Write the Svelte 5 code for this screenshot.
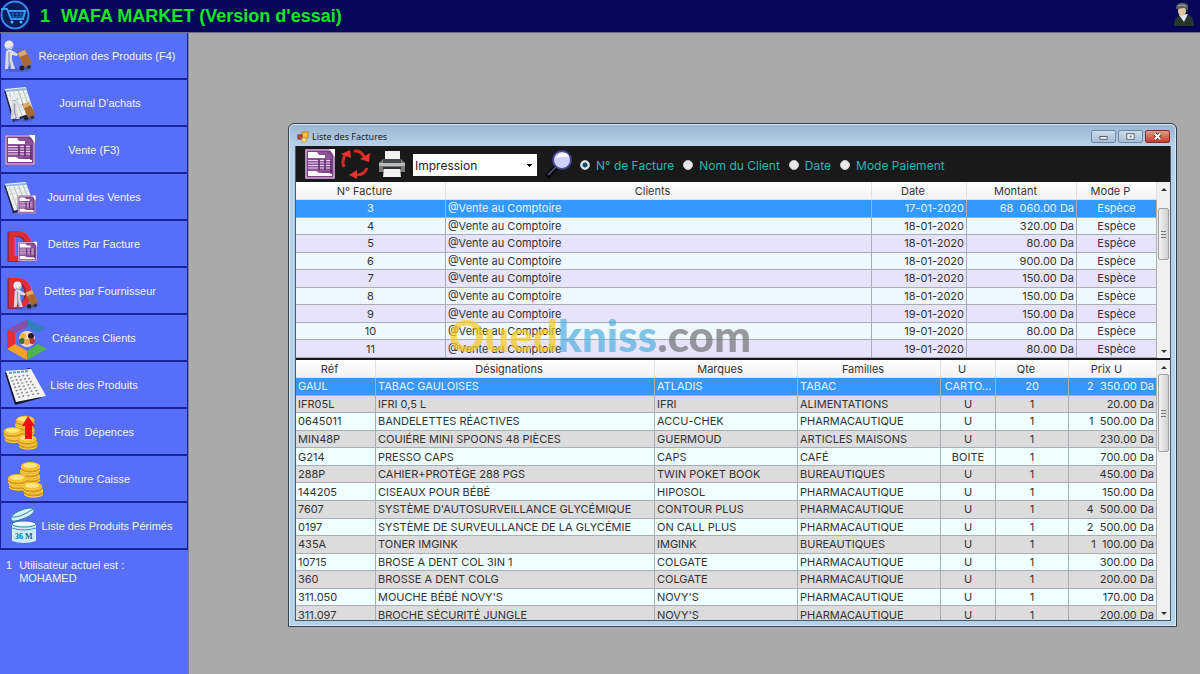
<script>
  let print = "Impression"
  let search = "numero"
  let selectedInvoice = "3"
  let selectedProduct = "GAUL"

  const menu = [
    { label: "Réception des Produits (F4)", icon: "delivery", shift: "far" },
    { label: "Journal D'achats", icon: "purchases", shift: "near" },
    { label: "Vente (F3)", icon: "sale" },
    { label: "Journal des Ventes", icon: "sales" },
    { label: "Dettes Par Facture", icon: "debtInvoice" },
    { label: "Dettes par Fournisseur", icon: "debtSupplier", shift: "near" },
    { label: "Créances Clients", icon: "clients" },
    { label: "Liste des Produits", icon: "products" },
    { label: "Frais  Dépences", icon: "expenses" },
    { label: "Clôture Caisse", icon: "cash" },
    { label: "Liste des Produits Périmés", icon: "expired", shift: "far" },
  ]

  const filters = [
    { value: "numero", label: "N° de Facture" },
    { value: "client", label: "Nom du Client" },
    { value: "date", label: "Date" },
    { value: "paiement", label: "Mode Paiement" },
  ]

  const client = "@Vente au Comptoire"
  const invoices = [
    ["3", client, "17-01-2020", "68  060.00 Da", "Espèce"],
    ["4", client, "18-01-2020", "320.00 Da", "Espèce"],
    ["5", client, "18-01-2020", "80.00 Da", "Espèce"],
    ["6", client, "18-01-2020", "900.00 Da", "Espèce"],
    ["7", client, "18-01-2020", "150.00 Da", "Espèce"],
    ["8", client, "18-01-2020", "150.00 Da", "Espèce"],
    ["9", client, "19-01-2020", "150.00 Da", "Espèce"],
    ["10", client, "19-01-2020", "80.00 Da", "Espèce"],
    ["11", client, "19-01-2020", "80.00 Da", "Espèce"],
  ]

  const products = [
    ["GAUL", "TABAC GAULOISES", "ATLADIS", "TABAC", "CARTO...", "20", "2  350.00 Da"],
    ["IFR05L", "IFRI 0,5 L", "IFRI", "ALIMENTATIONS", "U", "1", "20.00 Da"],
    ["0645011", "BANDELETTES RÉACTIVES", "ACCU-CHEK", "PHARMACAUTIQUE", "U", "1", "1  500.00 Da"],
    ["MIN48P", "COUIÉRE MINI SPOONS 48 PIÈCES", "GUERMOUD", "ARTICLES MAISONS", "U", "1", "230.00 Da"],
    ["G214", "PRESSO CAPS", "CAPS", "CAFÉ", "BOITE", "1", "700.00 Da"],
    ["288P", "CAHIER+PROTÈGE 288 PGS", "TWIN POKET BOOK", "BUREAUTIQUES", "U", "1", "450.00 Da"],
    ["144205", "CISEAUX POUR BÉBÉ", "HIPOSOL", "PHARMACAUTIQUE", "U", "1", "150.00 Da"],
    ["7607", "SYSTÈME D'AUTOSURVEILLANCE GLYCÉMIQUE", "CONTOUR PLUS", "PHARMACAUTIQUE", "U", "1", "4  500.00 Da"],
    ["0197", "SYSTÈME DE SURVEULLANCE DE LA GLYCÉMIE", "ON CALL PLUS", "PHARMACAUTIQUE", "U", "1", "2  500.00 Da"],
    ["435A", "TONER IMGINK", "IMGINK", "BUREAUTIQUES", "U", "1", "1  100.00 Da"],
    ["10715", "BROSE A DENT COL 3IN 1", "COLGATE", "PHARMACAUTIQUE", "U", "1", "300.00 Da"],
    ["360", "BROSSE A DENT COLG", "COLGATE", "PHARMACAUTIQUE", "U", "1", "200.00 Da"],
    ["311.050", "MOUCHE BÉBÉ NOVY'S", "NOVY'S", "PHARMACAUTIQUE", "U", "1", "170.00 Da"],
    ["311.097", "BROCHE SÉCURITÉ JUNGLE", "NOVY'S", "PHARMACAUTIQUE", "U", "1", "200.00 Da"],
  ]
</script>

{#snippet invoice()}
  <rect x="1" y="1" width="30" height="30" fill="#7b3f86" />
  <rect x="2" y="2" width="28" height="28" fill="none" stroke="#f0dcf2" stroke-width="1" />
  <path d="M4 4h20l4 4v20H4z" fill="#8d5597" />
  <path d="M4 4h9l2 3h6v3H4zM4 23h8l3 2h13v3H4zM25 1h6v8z" fill="#fff" />
  <path d="M4 12.500h24M4 15h24M4 17.500h24M4 20h24" stroke="#ead2ee" stroke-width="1" />
  <path d="M15 11v11M21 11v11M27 11v15" stroke="#5b2367" stroke-width="1.500" />
  <path d="M19 24h7" stroke="#7b3f86" stroke-width="1.500" />
{/snippet}

{#snippet worker()}
  <ellipse cx="14" cy="30" rx="12" ry="2" fill="#3f51b5" opacity="0.500" />
  <path d="M14 12l9 17" stroke="#59473a" stroke-width="1.500" />
  <path d="M14 13l7-3 7 13-8 4z" fill="#c98442" />
  <path d="M14 13l7-3 2 4-7 3z" fill="#e2a964" />
  <path d="M16 17l7-3 5 9-8 4z" fill="#a96a32" />
  <circle cx="18" cy="28" r="2.500" fill="#222" />
  <circle cx="25" cy="27" r="2" fill="#333" />
  <path d="M2 11q4-3 7 0l5 3-1 2-5-1v5l3 9H7l-2-7-1 7H1z" fill="#d9dae4" />
  <path d="M5 12v9l2 7" stroke="#9a9cb0" stroke-width="1.500" fill="none" />
  <circle cx="5" cy="5" r="4.500" fill="#e9e9ef" />
  <path d="M3 8q3 2 6-2" stroke="#a5a7b8" fill="none" />
{/snippet}

{#snippet sheet()}
  <path d="M0 3L23 0 33 26 10 34z" fill="#20243a" transform="translate(-1 1)" />
  <path d="M0 2L23 0 32 25 10 32z" fill="#eef3ee" />
  <path d="M1 4L24 2" stroke="#8db7dd" stroke-width="2" />
  <path d="M5 6l9 24M10 5l9 24M15 4l9 24M20 3l9 23" stroke="#a5b3b0" stroke-width="1" />
  <path d="M2 9l23-3M4 14l23-4M6 20l22-5M8 25l22-5" stroke="#d3dbd6" stroke-width="1" />
{/snippet}

{#snippet productList()}
  <path d="M-1 4L24-1 35 29 9 36z" fill="#15182c" />
  <path d="M0 2L25 0 40 27 10 33z" fill="#f4f5f2" />
  <path d="M3 4l20-2" stroke="#5c9bcf" stroke-width="2" stroke-dasharray="3 1" />
  <path d="M5 8l9 22M9 7l9 22M13 7l10 21M17 6l11 21M21 6l12 20" stroke="#888c90" stroke-width="2" stroke-dasharray="1.500 2" />
{/snippet}

{#snippet stack()}
  <path d="M1 3v5c0 5 19 5 19 0V3z" fill="#d8961a" />
  <path d="M1 5c2 4 17 4 19 0M1 8c2 4 17 4 19 0" fill="none" stroke="#f9dc62" />
  <ellipse cx="10.500" cy="4" rx="9.500" ry="4" fill="#f6c32e" />
  <ellipse cx="10" cy="3.500" rx="7" ry="2.500" fill="#ffe785" />
{/snippet}

{#snippet coins()}
  <g transform="translate(14 14)">{@render stack()}</g>
  <g transform="translate(13 9)">{@render stack()}</g>
  <g transform="translate(14 4)">{@render stack()}</g>
  <g transform="translate(2 21)">{@render stack()}</g>
  <g transform="translate(1 16)">{@render stack()}</g>
  <g transform="translate(17 28)">{@render stack()}</g>
  <g transform="translate(16 24)">{@render stack()}</g>
{/snippet}

{#snippet debt()}
  <text x="4" y="41" class="letter dark">D</text>
  <text x="5" y="40" class="letter">D</text>
{/snippet}

<div class="app">
  <header>
    <svg class="logo" viewBox="0 0 30 30" aria-hidden="true">
      <circle cx="15" cy="15" r="13.500" fill="#071b5e" stroke="#3489e6" stroke-width="2" />
      <path d="M1 9h6l4 10h12l2-8H8" fill="none" stroke="#3b9af5" stroke-width="2" />
      <path d="M10 14h14M11 17h12M13 11v8M17 11v8M21 11v8" stroke="#2766c4" />
      <circle cx="12" cy="22" r="1.500" fill="#5db5ff" />
      <circle cx="21" cy="22" r="1.500" fill="#5db5ff" />
    </svg>
    <h1><span>1</span> WAFA MARKET (Version d'essai)</h1>
    <svg class="user" viewBox="0 0 20 24" aria-hidden="true">
      <path d="M0 24q0-8 5-10l5 3 5-4q5 3 5 11z" fill="#25362f" />
      <path d="M5 13l5 7 4-8z" fill="#e6e9ef" />
      <ellipse cx="8" cy="9" rx="4" ry="5" fill="#e0c6a0" />
      <path d="M2 5q2-5 8-4 5 1 4 5l-1 5q0-5-3-5L2 7z" fill="#59625f" />
      <path d="M4 4q4-2 8 0" stroke="#a3ada8" fill="none" />
    </svg>
  </header>

  <div class="main">
    <aside>
      <nav>
        {#each menu as item}
          <button class={item.shift}>
            <svg viewBox="0 0 46 46" aria-hidden="true">
              {#if item.icon == "delivery"}
                <g transform="translate(3 7)">{@render worker()}</g>
              {:else if item.icon == "purchases"}
                <g transform="translate(4 7) scale(0.900 1)">{@render sheet()}</g>
                <g transform="translate(9 13) scale(0.900)">{@render worker()}</g>
              {:else if item.icon == "sale"}
                <g transform="translate(3 7)">{@render invoice()}</g>
              {:else if item.icon == "sales"}
                <g transform="translate(4 8) scale(0.900)">{@render sheet()}</g>
                <g transform="translate(16 21) scale(0.600)">{@render invoice()}</g>
              {:else if item.icon == "debtInvoice"}
                {@render debt()}
                <g transform="translate(16 20) scale(0.650)">{@render invoice()}</g>
              {:else if item.icon == "debtSupplier"}
                {@render debt()}
                <g transform="translate(12 13) scale(0.900)">{@render worker()}</g>
              {:else if item.icon == "clients"}
                <path d="M6 15l8-4v20l-8 4z" fill="#ee2b32" />
                <path d="M6 15L27 4v8l-13 6z" fill="#8a4fa9" />
                <path d="M27 4l18 9-8 5-10-6z" fill="#367fbe" />
                <path d="M6 34l8-5 12 7v9z" fill="#f5a41f" />
                <path d="M26 45v-9l11-7 9 5z" fill="#4fb34d" />
                <circle cx="26" cy="24" r="8" fill="#f3d8c4" />
                <circle cx="22" cy="21" r="3" fill="#e9b434" />
                <circle cx="30" cy="21" r="3" fill="#2b1b1b" />
                <circle cx="21" cy="26" r="3" fill="#32753b" />
                <circle cx="31" cy="26" r="3" fill="#bc2f35" />
                <circle cx="26" cy="27" r="3" fill="#e4a14e" />
              {:else if item.icon == "products"}
                <g transform="translate(5 7)">{@render productList()}</g>
              {:else if item.icon == "expenses"}
                <g transform="translate(1 3) scale(0.950)">{@render coins()}</g>
                <path d="M27 7l-6 10h3v13h7V17h3z" fill="#f50e12" />
              {:else if item.icon == "cash"}
                <g transform="translate(5 2)">{@render coins()}</g>
              {:else if item.icon == "expired"}
                <path d="M10 17q-1-5 8-9 12-5 15-2 1 5-9 9-12 5-14 2z" fill="#d5f3fb" stroke="#2a7ca4" />
                <path d="M11 14q8 1 21-8" stroke="#2a7ca4" fill="none" />
                <path d="M11 21v17q12 4 24 0V21z" fill="#ccedf9" />
                <ellipse cx="23" cy="21" rx="12" ry="3" fill="#eefbff" stroke="#2a7ca4" />
                <path d="M11 25q12 4 24 0" stroke="#3990b7" fill="none" />
                <text x="14" y="36" class="months">36 M</text>
              {/if}
            </svg>
            <span>{item.label}</span>
          </button>
        {/each}
      </nav>
      <div class="session">
        <span>1</span>
        <span>Utilisateur actuel est :<br />MOHAMED</span>
      </div>
    </aside>

    <main>
      <section class="window">
        <div class="titlebar">
          <svg viewBox="0 0 12 12" aria-hidden="true">
            <rect x="5" y="1" width="6" height="6" fill="#f5c33b" stroke="#b98418" />
            <rect x="1" y="4" width="4" height="4" fill="#cf4545" stroke="#812828" />
            <rect x="5" y="7" width="4" height="4" fill="#fff0a0" stroke="#cda43c" />
          </svg>
          <h2>Liste des Factures</h2>
          <div class="caption">
            <button aria-label="Réduire">
              <svg viewBox="0 0 24 12"><rect x="8" y="6" width="8" height="3" fill="#fff" stroke="#4a5a70" /></svg>
            </button>
            <button aria-label="Agrandir">
              <svg viewBox="0 0 24 12">
                <rect x="8" y="3" width="8" height="6" fill="#fff" stroke="#4a5a70" />
                <rect x="11" y="5" width="2" height="2" fill="#4a5a70" />
              </svg>
            </button>
            <button class="close" aria-label="Fermer">
              <svg viewBox="0 0 24 12">
                <path d="M9 3l6 6M15 3l-6 6" stroke="#6b2420" stroke-width="4" />
                <path d="M9 3l6 6M15 3l-6 6" stroke="#fff" stroke-width="2" />
              </svg>
            </button>
          </div>
        </div>

        <div class="content">
          <div class="toolbar">
            <button class="tool" aria-label="Facture">
              <svg viewBox="0 0 32 32">{@render invoice()}</svg>
            </button>
            <button class="tool" aria-label="Actualiser">
              <svg viewBox="0 0 32 32">
                <g fill="none" stroke="#d42a26" stroke-width="3">
                  <path d="M14 3q8-1 11 8" />
                  <path d="M4 19Q1 12 6 6" />
                  <path d="M27 20q-3 8-13 7" />
                </g>
                <path d="M20 11l9 3 1-9zM1 6l9-4 1 8zM17 22l-8 5 8 4z" fill="#e5322d" />
              </svg>
            </button>
            <button class="tool" aria-label="Imprimer">
              <svg viewBox="0 0 32 32">
                <rect x="9" y="3" width="15" height="10" fill="#f1f1f1" />
                <path d="M3 15l4-4h18l4 4v9H3z" fill="#77797a" />
                <path d="M3 15h26v3H3z" fill="#b9bbbc" />
                <path d="M7 11h18v4H7z" fill="#45484a" />
                <path d="M8 20h16l1 9H7z" fill="#f3f3f3" />
                <path d="M7 19h18v2H7z" fill="#2c2e30" />
              </svg>
            </button>
            <select bind:value={print} aria-label="Impression">
              <option>Impression</option>
            </select>
            <button class="tool" aria-label="Rechercher">
              <svg viewBox="0 0 32 32">
                <path d="M3 29l10-11" stroke="#000" stroke-width="5" />
                <path d="M4 27l10-10" stroke="#484a69" stroke-width="2" />
                <circle cx="18" cy="12" r="9" fill="#cfd0fb" stroke="#45468e" stroke-width="2" />
                <path d="M12 10q2-5 8-5 4 0 5 4-6-1-13 1z" fill="#fff" />
              </svg>
            </button>
            {#each filters as filter}
              <label>
                <input type="radio" name="search" bind:group={search} value={filter.value} />
                {filter.label}
              </label>
            {/each}
          </div>

          <div class="grid">
            <table class="invoices">
              <colgroup>
                <col class="w150" /><col /><col class="w95" /><col class="w110" /><col class="w80" />
              </colgroup>
              <thead>
                <tr><th>N° Facture</th><th>Clients</th><th>Date</th><th>Montant</th><th>Mode P</th></tr>
              </thead>
              <tbody>
                {#each invoices as row}
                  <tr class:selected={row[0] == selectedInvoice} on:click={() => (selectedInvoice = row[0])}>
                    {#each row as cell}<td>{cell}</td>{/each}
                  </tr>
                {/each}
              </tbody>
            </table>
            <div class="scrollbar">
              <svg viewBox="0 0 12 12"><path d="M3 8l3-3 3 3z" fill="#333" /></svg>
              <div class="thumb first"></div>
              <svg viewBox="0 0 12 12"><path d="M3 5l3 3 3-3z" fill="#333" /></svg>
            </div>
          </div>

          <div class="grid details">
            <table class="products">
              <colgroup>
                <col class="w80" /><col /><col class="w143" /><col class="w143" /><col class="w55" /><col class="w73" /><col class="w88" />
              </colgroup>
              <thead>
                <tr>
                  <th>Réf</th><th>Désignations</th><th>Marques</th><th>Familles</th><th>U</th><th>Qte</th><th>Prix U</th>
                </tr>
              </thead>
              <tbody>
                {#each products as row}
                  <tr class:selected={row[0] == selectedProduct} on:click={() => (selectedProduct = row[0])}>
                    {#each row as cell}<td>{cell}</td>{/each}
                  </tr>
                {/each}
              </tbody>
            </table>
            <div class="scrollbar">
              <svg viewBox="0 0 12 12"><path d="M3 8l3-3 3 3z" fill="#333" /></svg>
              <div class="thumb second"></div>
              <svg viewBox="0 0 12 12"><path d="M3 5l3 3 3-3z" fill="#333" /></svg>
            </div>
          </div>
        </div>
      </section>
    </main>
  </div>

  <div class="watermark"><span class="yellow">Oued</span><span class="blue">kniss</span><span class="gray">.com</span></div>
</div>

<style>
  :global(body) {
    background-color: #aaa;
  }
  .app {
    min-height: 100vh;
    display: flex;
    flex-direction: column;
    font-family: "Liberation Sans", Arial, sans-serif;
  }
  button {
    padding: 0;
    border: none;
    background: none;
    font: inherit;
    color: inherit;
  }
  h1,
  h2 {
    margin: 0;
  }

  /* top bar */

  header {
    display: flex;
    align-items: center;
    height: 33px;
    box-sizing: border-box;
    padding: 0 6px 2px 0;
    border-bottom: 1px solid #6f6f8c;
    background-color: #060656;
    color: #12e822;
  }
  header .logo {
    width: 30px;
    height: 30px;
  }
  header .user {
    width: 20px;
    height: 24px;
    margin: 0 0 2px auto;
  }
  h1 {
    padding: 2px 0 0 10px;
    font-size: 18px;
    line-height: 24px;
    font-weight: bold;
  }
  h1 span {
    padding-right: 6px;
  }

  /* side menu */

  .main {
    flex: 1;
    display: flex;
  }
  aside {
    flex: none;
    width: 188px;
    border-right: 1px solid #777b9c;
    background-color: #576ef8;
    color: #f1f3ff;
    font-size: 11px;
  }
  nav button {
    display: grid;
    align-items: center;
    width: 100%;
    height: 47px;
    border-bottom: 2px solid #17229c;
    border-left: 1px solid #17229c;
    border-right: 1px solid #17229c;
    white-space: pre;
    cursor: pointer;
  }
  nav svg,
  nav span {
    grid-area: 1 / 1;
  }
  nav svg {
    width: 46px;
    height: 46px;
  }
  nav .near span {
    padding-left: 12px;
  }
  nav .far span {
    padding-left: 26px;
  }
  .letter {
    font-family: Roboto, sans-serif;
    font-size: 42px;
    font-weight: bold;
    fill: #dc2d35;
  }
  .letter.dark {
    fill: #8e2444;
  }
  .months {
    font-family: "Liberation Serif", serif;
    font-size: 8px;
    font-weight: bold;
    fill: #17688d;
  }
  .session {
    display: flex;
    gap: 7px;
    padding: 9px 6px;
    line-height: 13px;
  }

  /* window */

  main {
    flex: 1;
    min-width: 0;
    padding: 90px 23px 47px 99px;
  }
  .window {
    padding: 0 5px 5px 6px;
    border: 1px solid #30404f;
    border-radius: 6px 6px 0 0;
    background: linear-gradient(#9ab6d2, #b9d0e8 22px, #b3d3ea);
    box-shadow: inset 0 0 0 1px #d7e8f6;
  }
  .titlebar {
    display: flex;
    align-items: center;
    height: 22px;
    padding-top: 3px;
    box-sizing: border-box;
  }
  .titlebar > svg {
    width: 12px;
    height: 12px;
    margin: 0 3px 0 2px;
  }
  h2 {
    font-family: "Noto Sans", sans-serif;
    font-size: 9px;
    line-height: 14px;
    font-weight: normal;
    color: #222;
  }
  .caption {
    display: flex;
    gap: 2px;
    margin-left: auto;
    padding-right: 1px;
  }
  .caption button {
    width: 25px;
    height: 13px;
    border: 1px solid #7287a3;
    border-radius: 2px;
    background: linear-gradient(#cddcec, #a8bdd6);
    display: flex;
  }
  .caption button.close {
    border-color: #7b2f2c;
    background: linear-gradient(#e39a8c, #c43c2a);
  }
  .caption svg {
    width: 100%;
    height: 100%;
  }
  .content {
    border: 1px solid #45586a;
    border-top: none;
    font-family: Inter, sans-serif;
    font-size: 11px;
    color: #333;
    background-color: #fff;
  }

  /* toolbar */

  .toolbar {
    display: flex;
    align-items: center;
    height: 36px;
    padding-left: 8px;
    background-color: #191919;
    color: #27b5b5;
    font-size: 12px;
  }
  .tool {
    width: 32px;
    height: 32px;
    margin-right: 4px;
  }
  .tool svg {
    display: block;
    width: 32px;
    height: 32px;
  }
  .toolbar select {
    width: 124px;
    height: 22px;
    margin: 2px 7px 0 1px;
    padding: 0 2px;
    border: none;
    border-radius: 0;
    appearance: none;
    font-family: inherit;
    font-size: 12px;
    color: #222;
    background:
      linear-gradient(#000, #000) right 7px center / 1px 3px no-repeat,
      linear-gradient(#000, #000) right 6px center / 3px 2px no-repeat,
      linear-gradient(#000, #000) right 5px top 10px / 5px 1px no-repeat,
      #fff;
  }
  .toolbar label {
    display: flex;
    align-items: center;
    gap: 6px;
    margin: 2px 9px 0 0;
    white-space: nowrap;
  }
  .toolbar input {
    appearance: none;
    width: 10px;
    height: 10px;
    margin: 0;
    border: 1px solid #ccc;
    border-radius: 50%;
    background-color: #e8e8e8;
  }
  .toolbar input:checked {
    background: radial-gradient(#1c4a66 2px, #d8ecf6 3px);
  }

  /* tables */

  .grid {
    display: flex;
  }
  .details {
    height: 260px;
    border-top: 2px solid #16161e;
    overflow: hidden;
  }
  table {
    flex: 1;
    min-width: 0;
    table-layout: fixed;
    border-spacing: 0;
  }
  .invoices {
    height: 176px;
  }
  .products {
    height: 264px;
  }
  th,
  td {
    box-sizing: border-box;
    padding: 1px 2px 0;
    border-right: 1px solid #a9adb5;
    border-bottom: 1px solid #a9adb5;
    line-height: 15px;
    white-space: pre;
    overflow: hidden;
  }
  th {
    height: 18px;
    padding-right: 14px;
    border-color: #e2e2e2;
    font-weight: normal;
    background: linear-gradient(#fff, #f2f2f2);
  }
  .invoices td {
    background-color: #f0f8ff;
  }
  .invoices tr:nth-child(odd) td {
    background-color: #e6e3fa;
  }
  .products td {
    background-color: #dcdcdc;
  }
  .products tr:nth-child(odd) td {
    background-color: #f0ffff;
  }
  table tr.selected:nth-child(n) td {
    background-color: #3399ff;
    color: #e4f3ff;
  }
  .invoices td:nth-child(1),
  .invoices td:nth-child(5),
  .products td:nth-child(5),
  .products td:nth-child(6) {
    text-align: center;
  }
  .invoices td:nth-child(3),
  .invoices td:nth-child(4),
  .products td:nth-child(7) {
    text-align: right;
  }
  .w150 {
    width: 150px;
  }
  .w143 {
    width: 143px;
  }
  .w110 {
    width: 110px;
  }
  .w95 {
    width: 95px;
  }
  .w88 {
    width: 88px;
  }
  .w80 {
    width: 80px;
  }
  .w73 {
    width: 73px;
  }
  .w55 {
    width: 55px;
  }

  /* scrollbars */

  .scrollbar {
    flex: none;
    width: 13px;
    display: flex;
    flex-direction: column;
    align-items: center;
    background-color: #f0f0f0;
  }
  .scrollbar svg {
    width: 12px;
    height: 14px;
  }
  .scrollbar svg:last-child {
    margin-top: auto;
  }
  .thumb {
    width: 11px;
    box-sizing: border-box;
    border: 1px solid #a0a0a0;
    border-radius: 2px;
    background:
      repeating-linear-gradient(#777 0 1px, transparent 1px 3px) center / 5px 7px no-repeat,
      linear-gradient(90deg, #f4f4f4, #cfcfd2);
  }
  .thumb.first {
    height: 52px;
    margin-top: 12px;
  }
  .thumb.second {
    height: 78px;
  }

  /* watermark */

  .watermark {
    position: fixed;
    inset: 0;
    display: flex;
    align-items: center;
    justify-content: center;
    padding-bottom: 4px;
    font-family: Lato, sans-serif;
    font-size: 44px;
    font-weight: 900;
    opacity: 0.700;
    pointer-events: none;
  }
  .yellow {
    color: #f7cb1c;
  }
  .blue {
    color: #51b0de;
  }
  .gray {
    color: #6f7275;
  }
</style>
